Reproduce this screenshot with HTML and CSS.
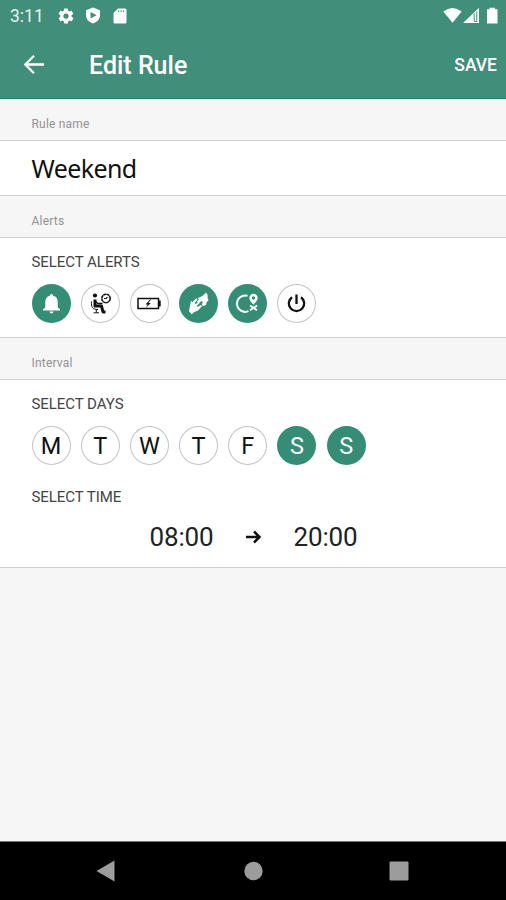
FILE: index.html
```html
<!DOCTYPE html>
<html lang="en">
<head>
<meta charset="utf-8">
<title>Edit Rule</title>
<link rel="stylesheet" href="styles.css">
</head>
<body>
<main class="screen">
  <header class="top">
    <div class="status">
      <span class="clock">3:11</span>
      <svg class="gear" width="18" height="18" viewBox="0 0 24 24"><path fill="currentColor" d="M19.4 13a7.800 7.800 0 0 0 0-2l2.100-1.700c.2-.1.300-.4.100-.6l-2-3.500c-.1-.2-.4-.3-.6-.2l-2.500 1a7.300 7.300 0 0 0-1.700-1l-.4-2.600a.5.5 0 0 0-.5-.4h-4a.5.5 0 0 0-.5.400L9 5a7.700 7.700 0 0 0-1.700 1l-2.500-1c-.2-.1-.5 0-.6.200l-2 3.500c-.1.200-.1.500.1.600L4.500 11a8 8 0 0 0 0 2l-2.100 1.700c-.2.100-.3.400-.1.600l2 3.500c.1.200.4.300.6.200l2.500-1c.5.400 1.100.7 1.700 1l.4 2.600c0 .2.200.4.500.4h4c.2 0 .5-.2.500-.4L15 19a7.700 7.700 0 0 0 1.700-1l2.500 1c.2.100.5 0 .6-.2l2-3.500c.1-.2.100-.5-.1-.6zM12 15.500a3.500 3.500 0 1 1 0-7 3.500 3.500 0 0 1 0 7z"/></svg>
      <svg class="shield" width="16" height="18" viewBox="0 0 16 18"><path fill="currentColor" fill-rule="evenodd" d="M8 .5l7 2.700V8c0 4-2.500 7-7 8.500C3.500 15 1 12 1 8V3.200zM5.500 5v6.400L11.600 8.200z"/></svg>
      <svg class="sd" width="14" height="16" viewBox="0 0 14 16"><path fill="currentColor" fill-rule="evenodd" d="M5 .5h7q1.500 0 1.500 1.500v12q0 1.500-1.500 1.500H2Q.5 15.500.5 14V5zM5 2.500v1.500h1.200V2.500zm2.500 0v1.500h1.200V2.500zM10 2.500v1.500h1.200V2.500z"/></svg>
      <svg class="signals" width="56" height="18" viewBox="0 0 56 18"><g fill="currentColor"><path d="M.3 4.500Q9.500-2.500 18.700 4.500L9.500 15.700z"/><path d="M20 16L36 .8V16z"/><path d="M46.500.8v1.500H44V16.500h10.500V2.300H52V.8z"/></g><path d="M31.200 6v8.500h2.600V4.500" fill="none" stroke="#418e7b" stroke-width="1"/></svg>
    </div>
    <div class="toolbar">
      <svg class="back" width="22" height="22" viewBox="0 0 22 22"><path d="M21 10.500H2.500M11 1.800L2.300 10.500l8.700 8.700" fill="none" stroke="currentColor" stroke-width="2.300"/></svg>
      <h1 class="title"><span>Edit Rule</span></h1>
      <span class="save">SAVE</span>
    </div>
  </header>

  <h2 class="label first">Rule name</h2>
  <section class="card name-card"><span class="name">Weekend</span></section>

  <h2 class="label second">Alerts</h2>
  <section class="card alerts-card">
    <h3 class="heading alerts-heading">SELECT ALERTS</h3>
    <div class="chips">
      <div class="chip on"><svg width="39" height="39" viewBox="0 0 39 39"><path fill="currentColor" d="M19.500 10q1.500 0 1.700 1.800c3.100.8 4.500 3.100 4.500 6.200v5.300l2.300 2.300v1H11v-1l2.300-2.300V18c0-3.100 1.400-5.400 4.500-6.200q.2-1.800 1.700-1.800zM17.500 27.500h4q-.3 2-2 2t-2-2z"/></svg></div>
      <div class="chip"><svg width="39" height="39" viewBox="0 0 39 39"><g fill="none" stroke="currentColor"><path d="M14 15.500v6.500h6.500l1.500 6h2.500" stroke-width="3" stroke-linejoin="round"/><path d="M14 17l3 2.500h4.500" stroke-width="1.400"/><path d="M10.500 17.500c-.5 5.500 1 8 6.500 8M15.300 25.500v3M12.500 28.800h5.500" stroke-width="1"/><circle cx="25" cy="14.500" r="4.200" stroke-width="1.600" stroke-dasharray="3 .3"/><path d="M23 14.500h2l1.500-1.300" stroke-width="1.200"/></g><circle cx="14" cy="11.500" r="2.100" fill="currentColor"/></svg></div>
      <div class="chip"><svg width="39" height="39" viewBox="0 0 39 39"><rect x="8" y="14.500" width="20.500" height="10" fill="none" stroke="currentColor" stroke-width="1.500"/><path fill="currentColor" d="M29 16.500h1.700v6H29zM20 15.500l-4.500 5h2.300l-2 3.500 5-5h-2.500l2.700-3.500z"/></svg></div>
      <div class="chip on"><svg width="39" height="39" viewBox="0 0 39 39"><path fill="currentColor" d="M19 14l4.500-2 3.500-3.500 1.500 2 .2 4 1 1.500-2 2-.7 3-3.300 1.200-.8-2 1-2-1.500-1.200-2.200 2-2.300-1.500 2-2zM12 16.800l1.500 1.200 3.800-3.700 1.200 1.200-2.700 3.300.5 1.500 2.700-2 1.500 1-2.700 2.500.7 1.200 3.500-2 .8 1.500-3.800 4-3.700 1.400-2.500 2.300-2.800-3 .7-3.700z"/></svg></div>
      <div class="chip on"><svg width="39" height="39" viewBox="0 0 39 39"><path d="M19.500 11.800a8.200 8.200 0 1 0 1 15.400" fill="none" stroke="currentColor" stroke-width="2"/><path fill="currentColor" fill-rule="evenodd" d="M25.500 9.800a4.200 4.200 0 0 1 4.200 4.200q0 2.500-4.200 6.700-4.200-4.200-4.200-6.700a4.200 4.200 0 0 1 4.200-4.200zm0 2.500a1.700 1.700 0 1 0 0 3.400 1.700 1.700 0 0 0 0-3.400z"/><path d="M22 21.500l7 4.800m0-4.800l-7 4.800" stroke="currentColor" stroke-width="1.900"/></svg></div>
      <div class="chip"><svg width="39" height="39" viewBox="0 0 39 39"><path d="M15 13.200a7.700 7.700 0 1 0 9 0M19.500 10.500v9.500" fill="none" stroke="currentColor" stroke-width="2.300"/></svg></div>
    </div>
  </section>

  <h2 class="label third">Interval</h2>
  <section class="card interval-card">
    <h3 class="heading days-heading">SELECT DAYS</h3>
    <div class="chips">
      <div class="chip">M</div><div class="chip">T</div><div class="chip">W</div><div class="chip">T</div><div class="chip">F</div><div class="chip on">S</div><div class="chip on">S</div>
    </div>
    <h3 class="heading time-heading">SELECT TIME</h3>
    <div class="times">
      <span class="time">08:00</span>
      <svg width="16" height="14" viewBox="0 0 16 14"><path d="M0 7h14M8 1.500L13.500 7l-5.500 5.500" fill="none" stroke="#111" stroke-width="2.500"/></svg>
      <span class="time">20:00</span>
    </div>
  </section>

  <nav class="nav">
    <svg width="20" height="22" viewBox="0 0 20 22"><path d="M.5 11L18.500.5v21z" fill="currentColor"/></svg>
    <svg width="20" height="20" viewBox="0 0 20 20"><circle cx="10.500" cy="10" r="9.200" fill="currentColor"/></svg>
    <svg width="20" height="20" viewBox="0 0 20 20"><rect x=".5" y=".5" width="19" height="19" rx="1" fill="currentColor"/></svg>
  </nav>
</main>
</body>
</html>
```
FILE: styles.css
```css
* { box-sizing: border-box; }
body { margin: 0; font-family: Roboto, sans-serif; color: #111; }
h1, h2, h3 { margin: 0; font-weight: 400; }
svg { display: block; flex: none; }
.screen { width: 506px; height: 900px; display: flex; flex-direction: column; background: #f6f6f6; overflow: hidden; }
.top { height: 99px; flex: none; background: #418e7b; border-bottom: 1px solid #238069; color: #fff; }
.status { height: 31px; display: flex; align-items: center; padding: 0 7px 0 10px; }
.clock { width: 47px; font-size: 17.500px; line-height: 31px; padding-top: 1px; color: #e5f1ed; }
.shield { margin-left: 10px; }
.sd { margin-left: 12px; }
.signals { margin-left: auto; }
.toolbar { height: 67px; display: flex; align-items: center; padding: 0 9px 0 23px; }
.title { margin-left: 44px; font-size: 25px; font-weight: 500; line-height: 67px; padding-top: 2px; }
.save { margin-left: auto; font-size: 17.500px; font-weight: 500; }
.label { flex: none; padding-left: 31.500px; font-size: 12px; color: #929292; letter-spacing: .2px; }
.first { height: 41px; line-height: 51px; }
.second { height: 41px; line-height: 51px; }
.third { height: 41px; line-height: 51px; }
.card { flex: none; background: #fff; border: solid #cfcfcf; border-width: 1px 0; padding-left: 31.500px; }
.name-card { height: 56px; }
.name { display: block; font-family: "Noto Sans", sans-serif; font-size: 25px; letter-spacing: -.6px; line-height: 55px; }
.alerts-card { height: 101px; }
.interval-card { height: 189px; }
.heading { font-size: 15px; letter-spacing: -.05px; line-height: 20px; color: #444; }
.alerts-heading, .days-heading { padding-top: 14px; height: 46px; }
.chips { display: flex; gap: 10.200px; }
.chip { width: 39px; height: 39px; flex: none; display: flex; align-items: center; justify-content: center; border-radius: 50%; box-shadow: inset 0 0 0 1px #c4c4c4; font-size: 23.500px; line-height: 39px; padding-top: 1px; }
.chip svg { margin-top: -1px; }
.on { background: #358d76; box-shadow: none; color: #fff; }
.time-heading { margin-top: 22px; }
.times { display: flex; align-items: center; gap: 32px; padding-left: 118px; height: 60px; }
.time { font-size: 26px; letter-spacing: -.15px; line-height: 60px; color: #222; }
.nav { margin-top: auto; height: 59px; flex: none; background: #000; border-top: 1px solid #777; color: #9c9c9c; display: flex; align-items: center; justify-content: space-between; padding: 0 97px 0 96px; }
```
